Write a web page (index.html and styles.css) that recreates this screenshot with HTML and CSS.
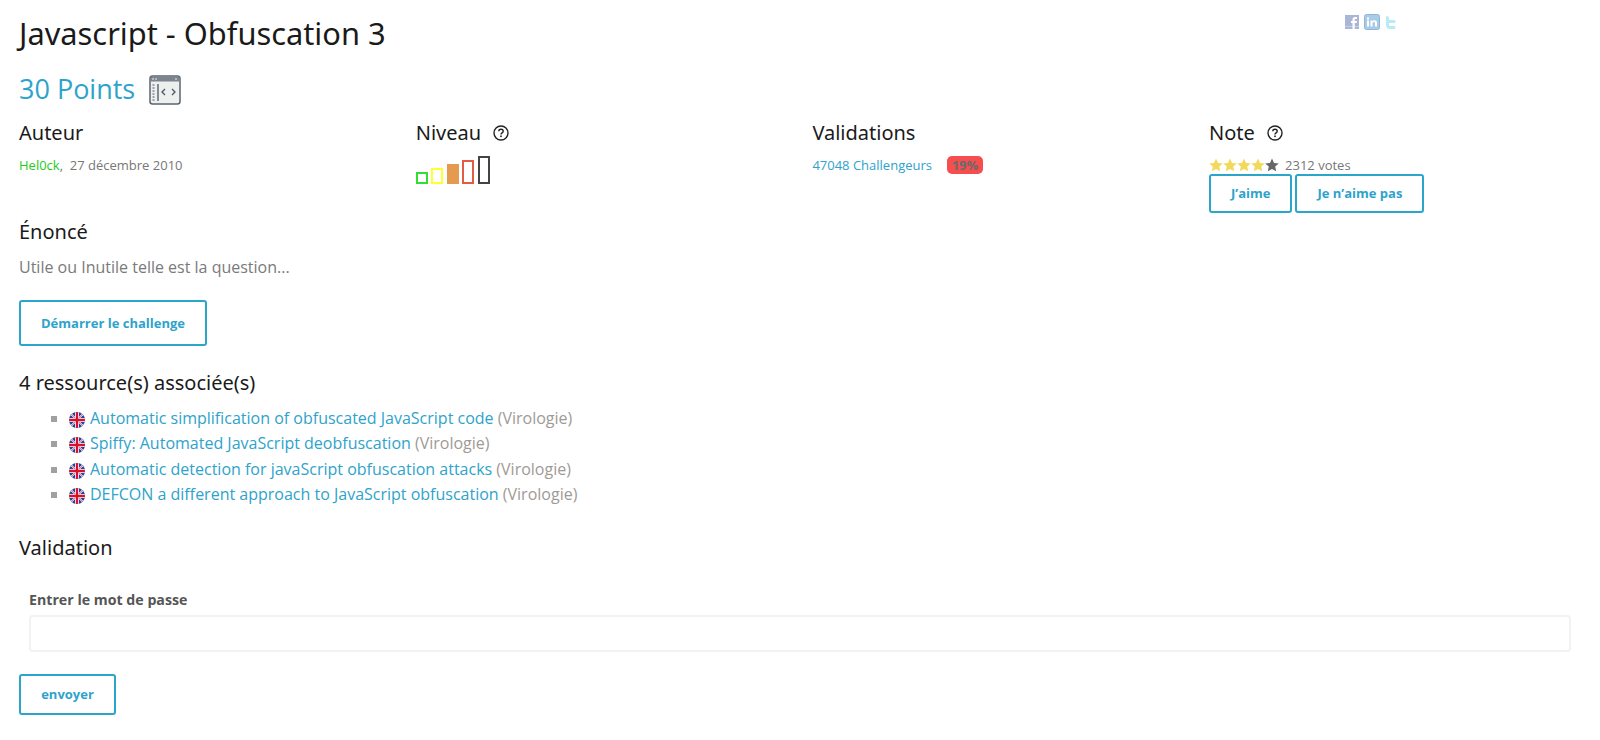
FILE: index.html
```html
<!DOCTYPE html>
<html lang="fr">
<head>
<meta charset="utf-8">
<title>Javascript - Obfuscation 3</title>
<link rel="stylesheet" href="styles.css">
</head>
<body>
<main class="page">
  <div class="social">
    <svg class="soc" viewBox="0 0 14 14"><rect width="14" height="14" fill="#a9b6d6"/><rect y="11" width="14" height="1" fill="#c5cee3"/><path d="M7.500 14V8H6V6h1.500V4.500C7.500 3 8.500 2 10 2h2v2h-1.500c-.5 0-.8.300-.8.800V6H12l-.3 2H9.700v6z" fill="#fff"/></svg>
    <svg class="soc soc-in" viewBox="0 0 16 16"><rect x=".5" y=".5" width="15" height="15" rx="2" fill="#a8cbe8" stroke="#8fb6da"/><rect x="3" y="6.500" width="2" height="6" fill="#fff"/><rect x="3" y="3.500" width="2" height="2" fill="#fff"/><path d="M6.500 6.500h2v1c.5-.8 1.200-1.200 2-1.200 1.500 0 2.500 1 2.500 2.700v3.500h-2V9.300c0-.8-.4-1.200-1-1.200s-1.500.4-1.500 1.200v3.200h-2z" fill="#fff"/></svg>
    <svg class="soc soc-tw" viewBox="0 0 12 15"><path d="M2 1c1.200 0 2 .7 2 2v2h5c1 0 1.500.7 1.500 1.500S10 8 9 8H4v1.500c0 1 .6 1.500 1.500 1.500H9c1 0 1.500.7 1.500 1.500S10 14 9 14H5C2.500 14 1 12.500 1 10V2.500C1 1.600 1.300 1 2 1z" fill="#b7ecf5"/></svg>
  </div>

  <h1 class="title">Javascript - Obfuscation 3</h1>
  <h2 class="points">30 Points
    <svg class="cat-icon" viewBox="0 0 32 30">
      <rect x="1" y="1" width="30" height="28" rx="2.500" fill="#eef0f0" stroke="#5c6470" stroke-width="1.500"/>
      <rect x="1.500" y="1.500" width="29" height="5" fill="#7c8490"/>
      <path d="M3 4h2M6 4h2M26 4h2" stroke="#eef0f0" stroke-width="1"/>
      <path d="M9 9v17" stroke="#4c5460" stroke-width="1.300"/>
      <path d="M3.500 10h2M3.500 13h2M3.500 16h2M3.500 19h2M3.500 22h2M3.500 25h2" stroke="#4c5460"/>
      <path d="M16 14l-3 3 3 3M23 14l3 3-3 3" fill="none" stroke="#4c5460" stroke-width="1.300"/>
    </svg>
  </h2>

  <section class="stats">
    <div class="stat">
      <h3 class="sub">Auteur</h3>
      <p class="small"><a class="author" href="#">Hel0ck</a>,&nbsp; 27 décembre 2010</p>
    </div>
    <div class="stat">
      <h3 class="sub">Niveau
        <svg class="help" viewBox="0 0 16 16"><circle cx="8" cy="8" r="7" fill="none" stroke="#222" stroke-width="1.400"/><path d="M5.800 6.300C5.800 5 6.800 4.300 8 4.300s2.200.7 2.200 1.900c0 1.700-2.200 1.600-2.200 3.200" fill="none" stroke="#222" stroke-width="1.400"/><rect x="7.200" y="10.500" width="1.600" height="1.600" fill="#222"/></svg>
      </h3>
      <div class="levels">
        <span class="lvl lvl1"></span>
        <span class="lvl lvl2"></span>
        <span class="lvl lvl3"></span>
        <span class="lvl lvl4"></span>
        <span class="lvl lvl5"></span>
      </div>
    </div>
    <div class="stat">
      <h3 class="sub">Validations</h3>
      <p class="small"><a class="link" href="#">47048 Challengeurs</a><span class="pct">19%</span></p>
    </div>
    <div class="stat">
      <h3 class="sub">Note
        <svg class="help" viewBox="0 0 16 16"><circle cx="8" cy="8" r="7" fill="none" stroke="#222" stroke-width="1.400"/><path d="M5.800 6.300C5.800 5 6.800 4.300 8 4.300s2.200.7 2.200 1.900c0 1.700-2.200 1.600-2.200 3.200" fill="none" stroke="#222" stroke-width="1.400"/><rect x="7.200" y="10.500" width="1.600" height="1.600" fill="#222"/></svg>
      </h3>
      <div class="small votes">
        <span class="stars">
          <svg class="star on" viewBox="0 0 14 14"><use href="#star"/></svg>
          <svg class="star on" viewBox="0 0 14 14"><use href="#star"/></svg>
          <svg class="star on" viewBox="0 0 14 14"><use href="#star"/></svg>
          <svg class="star on" viewBox="0 0 14 14"><use href="#star"/></svg>
          <svg class="star off" viewBox="0 0 14 14"><use href="#star"/></svg>
        </span>
        2312 votes
      </div>
      <div class="vote-btns">
        <a class="btn btn-vote" href="#">J’aime</a>
        <a class="btn btn-vote" href="#">Je n’aime pas</a>
      </div>
    </div>
  </section>

  <h3 class="sub enonce">Énoncé</h3>
  <p class="text">Utile ou Inutile telle est la question...</p>
  <a class="btn btn-start" href="#">Démarrer le challenge</a>

  <h3 class="sub res-title">4 ressource(s) associée(s)</h3>
  <ul class="resources">
    <li><svg class="flag" viewBox="0 0 16 16"><use href="#uk"/></svg><a class="link" href="#">Automatic simplification of obfuscated JavaScript code</a> <span class="cat">(Virologie)</span></li>
    <li><svg class="flag" viewBox="0 0 16 16"><use href="#uk"/></svg><a class="link" href="#">Spiffy: Automated JavaScript deobfuscation</a> <span class="cat">(Virologie)</span></li>
    <li><svg class="flag" viewBox="0 0 16 16"><use href="#uk"/></svg><a class="link" href="#">Automatic detection for javaScript obfuscation attacks</a> <span class="cat">(Virologie)</span></li>
    <li><svg class="flag" viewBox="0 0 16 16"><use href="#uk"/></svg><a class="link" href="#">DEFCON a different approach to JavaScript obfuscation</a> <span class="cat">(Virologie)</span></li>
  </ul>

  <h3 class="sub val-title">Validation</h3>
  <form class="val-form">
    <label class="lab" for="pw">Entrer le mot de passe</label>
    <input class="field" id="pw" type="text">
  </form>
  <a class="btn btn-send" href="#">envoyer</a>

  <svg class="defs" width="0" height="0">
    <defs>
      <clipPath id="c"><circle cx="8" cy="8" r="8"/></clipPath>
      <g id="uk" clip-path="url(#c)">
        <rect width="16" height="16" fill="#23479f"/>
        <path d="M0 0l16 16M16 0L0 16" stroke="#fff" stroke-width="1.600"/>
        <path d="M0 0l16 16M16 0L0 16" stroke="#d8203a" stroke-width=".6"/>
        <path d="M8 0v16M0 8h16" stroke="#fff" stroke-width="4"/>
        <path d="M8 0v16M0 8h16" stroke="#d8102e" stroke-width="2.400"/>
      </g>
      <path id="star" d="M7 .5l2 4.400 4.800.5-3.600 3.200 1 4.700L7 10.900l-4.200 2.400 1-4.700L.2 5.400 5 4.900z"/>
    </defs>
  </svg>
</main>
</body>
</html>
```
FILE: styles.css
```css
* { box-sizing: border-box; }
html, body { margin: 0; padding: 0; background: #fff; }
body { font-family: "Open Sans", "Liberation Sans", sans-serif; color: #7a7a7a; font-size: 16px; }
.page { position: relative; padding: 0 19px; height: 740px; overflow: hidden; }
a { text-decoration: none; }
h1, h2, h3, p, ul { margin: 0; padding: 0; font-weight: 400; }

.social { position: absolute; top: 14px; left: 1345px; display: flex; align-items: flex-start; gap: 5px; }
.soc { width: 14px; height: 14px; margin-top: 1px; display: block; }
.soc-in { width: 16px; height: 16px; margin-top: 0; }
.soc-tw { width: 12px; height: 15px; }

.title { font-family: "Noto Sans", sans-serif; font-size: 30.800px; line-height: 40px; color: #1a1a1a; padding-top: 13px; }
.points { font-family: "Open Sans", sans-serif; font-size: 27px; line-height: 36px; color: #2ea3cb; margin-top: 18px; display: flex; align-items: center; gap: 14px; }
.cat-icon { width: 32px; height: 30px; position: relative; top: 1px; }

.stats { display: grid; grid-template-columns: repeat(4, 396.700px); margin-top: 13px; }
.sub { font-family: "Noto Sans", sans-serif; font-size: 20px; line-height: 26px; color: #1a1a1a; display: flex; align-items: center; }
.help { width: 16px; height: 16px; margin-left: 12px; }
.small { font-size: 13px; line-height: 18px; margin-top: 10px; color: #777; }
.author { color: #22cc22; }
.link { color: #2ea3cb; }
.pct { display: inline-block; margin-left: 15px; background: #f64e4e; color: #6a6a6a; font-weight: 700; font-size: 13px; line-height: 18px; width: 36px; text-align: center; border-radius: 5px; }

.levels { display: flex; align-items: flex-end; gap: 3.500px; height: 29px; margin-top: 9px; }
.lvl { display: block; width: 12px; border: 2px solid; }
.lvl1 { height: 12px; border-color: #33dd33; }
.lvl2 { height: 16px; border-color: #ffff33; }
.lvl3 { height: 20px; border-color: #e49b4f; background: #e49b4f; }
.lvl4 { height: 24px; border-color: #e25b45; }
.lvl5 { height: 28px; border-color: #444; }

.votes { margin-top: 10px; display: flex; align-items: center; gap: 6px; height: 18px; }
.stars { display: flex; }
.star { width: 14px; height: 14px; display: block; }
.on { fill: #f2d95c; }
.off { fill: #666; }
.vote-btns { display: flex; gap: 3px; }
.btn { display: inline-block; border: 2px solid #2ba5c9; border-radius: 3px; color: #2ea3cb; font-weight: 700; font-size: 13px; text-align: center; }
.btn-vote { line-height: 35px; padding: 0 20px; }

.enonce { margin-top: 6px; }
.text { font-size: 16px; line-height: 24px; margin-top: 10px; }
.btn-start { display: block; width: 188px; line-height: 42px; margin-top: 21px; }

.res-title { margin-top: 24px; }
.resources { list-style: none; margin-top: 10px; padding-left: 32px; }
.resources li { position: relative; font-size: 16px; line-height: 25.400px; display: block; }
.resources li::before { content: ""; position: absolute; left: 0; top: 10px; width: 6px; height: 6px; background: #a0a0a0; }
.flag { width: 16px; height: 16px; margin: 0 5px 0 18px; vertical-align: -4px; }
.cat { color: #a09a96; }

.val-title { margin-top: 27px; }
.val-form { padding: 0 10px; margin-top: 29px; }
.lab { display: block; font-size: 14.200px; font-weight: 700; color: #555; line-height: 20px; }
.field { display: block; width: 100%; height: 37px; margin-top: 5px; background: #fff; border: 2px solid #f2f2f2; border-radius: 4px; }
.btn-send { display: block; width: 97px; line-height: 37px; margin-top: 22px; }
.defs { position: absolute; }
```
